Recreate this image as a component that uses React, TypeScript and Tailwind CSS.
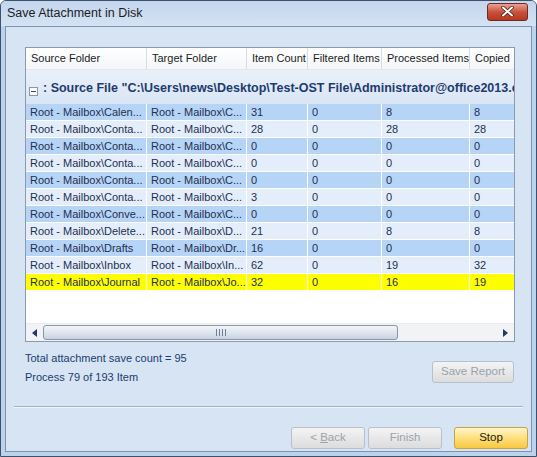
import React from 'react';

type Row = { src: string; tgt: string; count: string; filtered: string; processed: string; copied: string };

const rows: Row[] = [
  { src: 'Root - Mailbox\\Calen...', tgt: 'Root - Mailbox\\C...', count: '31', filtered: '0', processed: '8', copied: '8' },
  { src: 'Root - Mailbox\\Conta...', tgt: 'Root - Mailbox\\C...', count: '28', filtered: '0', processed: '28', copied: '28' },
  { src: 'Root - Mailbox\\Conta...', tgt: 'Root - Mailbox\\C...', count: '0', filtered: '0', processed: '0', copied: '0' },
  { src: 'Root - Mailbox\\Conta...', tgt: 'Root - Mailbox\\C...', count: '0', filtered: '0', processed: '0', copied: '0' },
  { src: 'Root - Mailbox\\Conta...', tgt: 'Root - Mailbox\\C...', count: '0', filtered: '0', processed: '0', copied: '0' },
  { src: 'Root - Mailbox\\Conta...', tgt: 'Root - Mailbox\\C...', count: '3', filtered: '0', processed: '0', copied: '0' },
  { src: 'Root - Mailbox\\Conve...', tgt: 'Root - Mailbox\\C...', count: '0', filtered: '0', processed: '0', copied: '0' },
  { src: 'Root - Mailbox\\Delete...', tgt: 'Root - Mailbox\\D...', count: '21', filtered: '0', processed: '8', copied: '8' },
  { src: 'Root - Mailbox\\Drafts', tgt: 'Root - Mailbox\\Dr...', count: '16', filtered: '0', processed: '0', copied: '0' },
  { src: 'Root - Mailbox\\Inbox', tgt: 'Root - Mailbox\\In...', count: '62', filtered: '0', processed: '19', copied: '32' },
  { src: 'Root - Mailbox\\Journal', tgt: 'Root - Mailbox\\Jo...', count: '32', filtered: '0', processed: '16', copied: '19' },
];

const headers = [
  { label: 'Source Folder', w: 'w-[121px]' },
  { label: 'Target Folder', w: 'w-[100px]' },
  { label: 'Item Count', w: 'w-[61px]' },
  { label: 'Filtered Items', w: 'w-[74px]' },
  { label: 'Processed Items', w: 'w-[88px]' },
  { label: 'Copied', w: 'w-[60px]' },
];

const Cell: React.FC<{ w: string; children: React.ReactNode }> = ({ w, children }) => (
  <div className={`${w} shrink-0 h-full pl-[4px] border-r border-white whitespace-nowrap overflow-hidden leading-[16px]`}>
    {children}
  </div>
);

const WinButton: React.FC<{ children: React.ReactNode; className?: string; disabled?: boolean }> = ({ children, className, disabled }) => (
  <button
    className={`h-[22px] rounded-[3px] border text-[11.5px] flex items-center justify-center ${
      disabled
        ? 'border-[#b7c1cc] bg-gradient-to-b from-[#f4f4f4] to-[#dcdcdc] text-[#9aa2ab]'
        : 'border-[#c8a445] bg-gradient-to-b from-[#fff5c8] via-[#fddf7c] to-[#f8c83c] text-[#1a1a1a]'
    } ${className ?? ''}`}
  >
    {children}
  </button>
);

export default function App() {
  return (
    <div className="w-[537px] h-[457px] bg-[#bcd3ed] border border-[#3f5068] rounded-t-[6px] flex flex-col text-[11px] text-[#1e2f50] overflow-hidden" style={{ fontFamily: '"Liberation Sans", Arial, sans-serif' }}>
      {/* title bar */}
      <div className="h-[25px] shrink-0 flex items-center justify-between pl-[6px] pr-[8px] bg-gradient-to-b from-[#c3d6ee] to-[#d4e2f3]">
        <span className="text-[12.5px] text-[#1c1c1c]">Save Attachment in Disk</span>
        <div className="w-[41px] h-[18px] mt-[-4px] rounded-[3px] border border-[#6d2a22] bg-gradient-to-b from-[#e7a293] via-[#c9513b] to-[#b8361f] flex items-center justify-center">
          <svg width="13" height="11" viewBox="0 0 13 11">
            <path d="M2 1.5 L11 9.5 M11 1.5 L2 9.5" stroke="#4a1a12" strokeWidth="3.4" strokeLinecap="round" />
            <path d="M2 1.5 L11 9.5 M11 1.5 L2 9.5" stroke="#ffffff" strokeWidth="2" strokeLinecap="round" />
          </svg>
        </div>
      </div>

      {/* client area */}
      <div className="flex-1 mx-[4px] mb-[4px] border border-[#7d93ae] bg-[#d6e4f3] flex flex-col">
        <div className="pl-[19px] pr-[15px] pt-[20px]">
          {/* list view */}
          <div className="w-[490px] h-[295px] border border-[#8c9aac] bg-white flex flex-col overflow-hidden">
            <div className="h-[22px] shrink-0 flex bg-gradient-to-b from-white to-[#f4f6f9] border-b border-[#e4e8ee]">
              {headers.map((h) => (
                <div key={h.label} className={`${h.w} shrink-0 flex items-center pl-[5px] border-r border-[#d8dde4] whitespace-nowrap overflow-hidden text-[#1b1b1b]`}>
                  {h.label}
                </div>
              ))}
            </div>

            <div className="h-[34px] shrink-0 flex items-end pb-[6px] pl-[3px] bg-gradient-to-b from-[#e9f0f9] to-[#d9e5f5] whitespace-nowrap overflow-hidden">
              <div className="w-[9px] h-[9px] border border-[#8b97a6] bg-white flex items-center justify-center mr-[5px] mb-[2px] shrink-0">
                <div className="w-[5px] h-[1px] bg-[#3b4a5e]" />
              </div>
              <span className="font-bold text-[12.5px] text-[#1d3b6e]">: Source File "C:\Users\news\Desktop\Test-OST File\Administrator@office2013.com</span>
            </div>

            <div className="flex flex-col">
              {rows.map((r, i) => {
                const bg = i === rows.length - 1 ? 'bg-[#ffff00]' : i % 2 === 0 ? 'bg-[#b6d4f6]' : 'bg-[#e4eefa]';
                return (
                  <div key={i} className={`h-[17px] flex border-b border-white ${bg}`}>
                    <Cell w="w-[121px]">{r.src}</Cell>
                    <Cell w="w-[100px]">{r.tgt}</Cell>
                    <Cell w="w-[61px]">{r.count}</Cell>
                    <Cell w="w-[74px]">{r.filtered}</Cell>
                    <Cell w="w-[88px]">{r.processed}</Cell>
                    <Cell w="w-[60px]">{r.copied}</Cell>
                  </div>
                );
              })}
            </div>

            <div className="flex-1" />

            {/* horizontal scrollbar */}
            <div className="h-[18px] shrink-0 flex items-center bg-[#f2f3f5] border-t border-[#e8ebef]">
              <div className="w-[17px] flex justify-center">
                <svg width="5" height="8" viewBox="0 0 5 8"><path d="M5 0 L0 4 L5 8 Z" fill="#1e3a6a" /></svg>
              </div>
              <div className="w-[355px] h-[15px] rounded-[3px] border border-[#8a97a8] bg-gradient-to-b from-[#f3f6fa] via-[#dfe6ef] to-[#c7d2e0] flex items-center justify-center">
                <div className="flex gap-[2px]">
                  <div className="w-[1px] h-[7px] bg-[#6e7f96]" />
                  <div className="w-[1px] h-[7px] bg-[#6e7f96]" />
                  <div className="w-[1px] h-[7px] bg-[#6e7f96]" />
                  <div className="w-[1px] h-[7px] bg-[#6e7f96]" />
                </div>
              </div>
              <div className="flex-1" />
              <div className="w-[17px] flex justify-center">
                <svg width="5" height="8" viewBox="0 0 5 8"><path d="M0 0 L5 4 L0 8 Z" fill="#1e3a6a" /></svg>
              </div>
            </div>
          </div>

          {/* status + save report */}
          <div className="flex justify-between mt-[9px]">
            <div className="flex flex-col gap-[4px] text-[#1c3d6e] leading-[15px]">
              <span>Total attachment save count = 95</span>
              <span>Process 79 of 193 Item</span>
            </div>
            <WinButton disabled className="w-[82px] mt-[10px] mr-[2px]">Save Report</WinButton>
          </div>
        </div>

        <div className="mx-[8px] mt-[21px] h-[2px] border-t border-[#9fb2c8] border-b border-b-[#eef4fb]" />

        <div className="flex justify-end gap-[3px] pr-[3px] mt-[19px]">
          <WinButton disabled className="w-[74px]"><span>&lt; <u>B</u>ack</span></WinButton>
          <WinButton disabled className="w-[74px] mr-[9px]">Finish</WinButton>
          <WinButton className="w-[74px]">Stop</WinButton>
        </div>
      </div>
    </div>
  );
}
